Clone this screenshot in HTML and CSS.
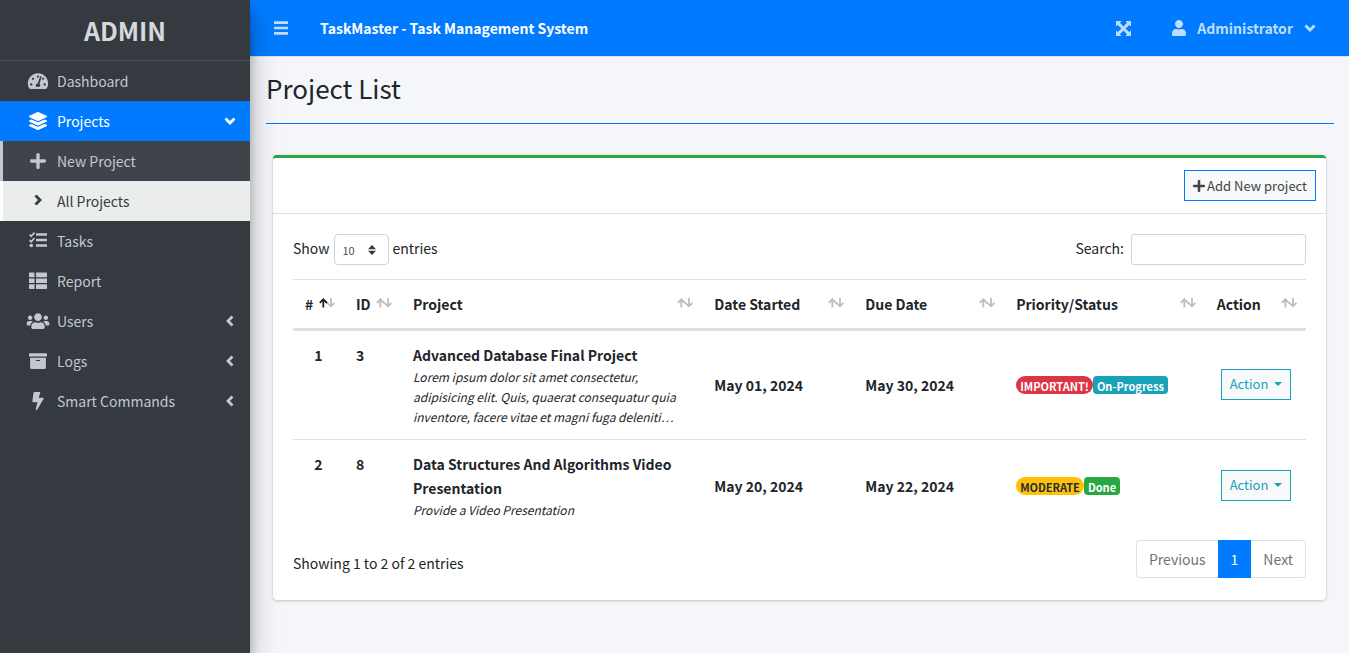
FILE: index.html
```html
<!DOCTYPE html>
<html lang="en">
<head>
<meta charset="utf-8">
<title>TaskMaster - Task Management System</title>
<link rel="stylesheet" href="styles.css">
</head>
<body>
<svg class="sprite" aria-hidden="true">
  <symbol id="i-plus" viewBox="0 0 448 512"><path d="M416 208H272V64c0-17.67-14.33-32-32-32h-32c-17.67 0-32 14.33-32 32v144H32c-17.67 0-32 14.33-32 32v32c0 17.67 14.33 32 32 32h144v144c0 17.67 14.33 32 32 32h32c17.67 0 32-14.33 32-32V304h144c17.67 0 32-14.33 32-32v-32c0-17.67-14.33-32-32-32z"/></symbol>
  <symbol id="i-left" viewBox="0 0 10 12"><path d="M7.5 1.5L3 6l4.500 4.500" fill="none" stroke="currentColor" stroke-width="2.800"/></symbol>
  <symbol id="i-sort" viewBox="0 0 16 10"><g fill="none" stroke="currentColor" stroke-width="1.800"><path d="M4.300 9.500V1.500M.8 4.800l3.500-3.500 3.700 3.700"/><path d="M12 0v8M8 4.600l4 3.700 3.500-3.500"/></g></symbol>
</svg>
<div class="app">
  <aside class="sidebar">
    <a class="brand" href="#">ADMIN</a>
    <nav class="menu">
      <a class="item" href="#"><svg class="icon" viewBox="0 0 576 512"><path d="M288 32C128.940 32 0 160.940 0 320c0 52.800 14.250 102.260 39.060 144.800 5.610 9.620 16.300 15.200 27.440 15.200h443c11.140 0 21.830-5.580 27.440-15.200C561.750 422.260 576 372.800 576 320c0-159.060-128.940-288-288-288zm0 64c14.710 0 26.580 10.130 30.320 23.650-1.110 2.260-2.640 4.230-3.450 6.670l-9.220 27.670c-5.130 3.490-10.970 6.010-17.640 6.010-17.670 0-32-14.330-32-32S270.330 96 288 96zM96 384c-17.670 0-32-14.330-32-32s14.330-32 32-32 32 14.330 32 32-14.330 32-32 32zm48-160c-17.670 0-32-14.330-32-32s14.330-32 32-32 32 14.330 32 32-14.330 32-32 32zm246.770-72.410l-61.330 184C343.130 347.330 352 364.540 352 384c0 11.720-3.380 22.550-8.880 32H232.880c-5.500-9.450-8.880-20.280-8.880-32 0-33.940 26.500-61.430 59.900-63.590l61.340-184.010c4.170-12.560 17.730-19.450 30.360-15.170 12.570 4.190 19.350 17.790 15.170 30.360zm14.660 57.200l15.520-46.550c3.470-1.290 7.130-2.230 11.050-2.230 17.670 0 32 14.330 32 32s-14.330 32-32 32c-11.380-.01-20.890-6.280-26.570-15.220zM480 384c-17.670 0-32-14.330-32-32s14.330-32 32-32 32 14.330 32 32-14.330 32-32 32z"/></svg><span>Dashboard</span></a>
      <a class="item active" href="#"><svg class="icon" viewBox="0 0 512 512"><path d="M12.410 148.020l232.940 105.670c6.800 3.090 14.490 3.090 21.290 0l232.940-105.670c16.550-7.510 16.550-32.520 0-40.030L266.650 2.310a25.607 25.607 0 0 0-21.290 0L12.410 107.980c-16.550 7.510-16.550 32.530 0 40.040zm487.180 88.280l-58.090-26.330-161.640 73.270c-7.560 3.430-15.590 5.170-23.860 5.170s-16.290-1.740-23.860-5.170L70.510 209.970l-58.100 26.330c-16.550 7.500-16.550 32.500 0 40l232.940 105.590c6.800 3.080 14.490 3.080 21.290 0L499.590 276.300c16.550-7.500 16.550-32.500 0-40zm0 127.800l-57.870-26.230-161.860 73.370c-7.560 3.430-15.590 5.170-23.860 5.170s-16.290-1.740-23.860-5.170L70.290 337.870 12.410 364.100c-16.550 7.500-16.550 32.500 0 40l232.940 105.590c6.800 3.080 14.490 3.080 21.290 0L499.590 404.100c16.550-7.500 16.550-32.500 0-40z"/></svg><span>Projects</span><svg class="caret open"><use href="#i-left"/></svg></a>
      <a class="item sub" href="#"><svg class="icon"><use href="#i-plus"/></svg><span>New Project</span></a>
      <a class="item sub current" href="#"><svg class="icon" viewBox="0 0 18 18"><path d="M6.500 3.500L11 8l-4.500 4.500" fill="none" stroke="currentColor" stroke-width="2.800"/></svg><span>All Projects</span></a>
      <a class="item" href="#"><svg class="icon" viewBox="0 0 18 18"><path d="M7 2.500h11M7 8h11M7 13.500h11" fill="none" stroke="currentColor" stroke-width="2.400"/><path d="M.6 2.700l1.600 1.500L5.500.6M.6 8.200l1.600 1.500 3.300-3.700" fill="none" stroke="currentColor" stroke-width="1.700"/><circle cx="2.300" cy="13.500" r="1.800"/></svg><span>Tasks</span></a>
      <a class="item" href="#"><svg class="icon" viewBox="0 0 18 18"><path d="M.8.500h4a.8.800 0 0 1 .8.800v4H0v-4a.8.800 0 0 1 .8-.8zM7 .500h10.200a.8.800 0 0 1 .8.800v4H7zM0 6.500h5.600v4.600H0zM7 6.500h11v4.600H7zM0 12.300h5.600V17H.800a.8.800 0 0 1-.8-.8zM7 12.300h11v3.900a.8.800 0 0 1-.8.800H7z"/></svg><span>Report</span></a>
      <a class="item" href="#"><svg class="icon" viewBox="0 0 640 512"><path d="M96 224c35.300 0 64-28.700 64-64s-28.700-64-64-64-64 28.700-64 64 28.700 64 64 64zm448 0c35.300 0 64-28.700 64-64s-28.700-64-64-64-64 28.700-64 64 28.700 64 64 64zm32 32h-64c-17.600 0-33.500 7.100-45.100 18.600 40.300 22.100 68.900 62 75.100 109.400h66c17.700 0 32-14.300 32-32v-32c0-35.300-28.700-64-64-64zm-256 0c61.900 0 112-50.100 112-112S381.900 32 320 32 208 82.100 208 144s50.100 112 112 112zm76.800 32h-8.300c-20.800 10-43.900 16-68.500 16s-47.600-6-68.500-16h-8.300C179.600 288 128 339.600 128 403.200V432c0 26.500 21.500 48 48 48h288c26.500 0 48-21.500 48-48v-28.800c0-63.600-51.600-115.200-115.200-115.200zm-223.700-13.400C161.500 263.100 145.600 256 128 256H64c-35.300 0-64 28.700-64 64v32c0 17.700 14.300 32 32 32h65.900c6.300-47.400 34.900-87.300 75.200-109.400z"/></svg><span>Users</span><svg class="caret"><use href="#i-left"/></svg></a>
      <a class="item" href="#"><svg class="icon" viewBox="0 0 512 512"><path d="M32 448c0 17.700 14.300 32 32 32h384c17.700 0 32-14.300 32-32V160H32v288zm160-212c0-6.600 5.400-12 12-12h104c6.600 0 12 5.400 12 12v8c0 6.600-5.400 12-12 12H204c-6.600 0-12-5.400-12-12v-8zM480 32H32C14.300 32 0 46.300 0 64v48c0 8.800 7.200 16 16 16h480c8.800 0 16-7.200 16-16V64c0-17.700-14.300-32-32-32z"/></svg><span>Logs</span><svg class="caret"><use href="#i-left"/></svg></a>
      <a class="item" href="#"><svg class="icon" viewBox="0 0 320 512"><path d="M296 160H180.600l42.600-129.800C227.200 15 215.700 0 200 0H56C44 0 33.800 8.900 32.200 20.800l-32 240C-1.700 275.200 9.500 288 24 288h118.700L96.600 482.500c-3.600 15.200 8 29.500 23.300 29.500 8.400 0 16.400-4.400 20.800-12l176-304c9.300-15.900-2.200-36-20.700-36z"/></svg><span>Smart Commands</span><svg class="caret"><use href="#i-left"/></svg></a>
    </nav>
  </aside>
  <div class="page">
    <header class="topbar">
      <button class="bar-btn" type="button" aria-label="Toggle menu"><svg class="bars" viewBox="0 0 14 14"><path d="M0 .3h14v2.600H0zM0 5.700h14v2.600H0zM0 11.100h14v2.600H0z"/></svg></button>
      <a class="title" href="#">TaskMaster - Task Management System</a>
      <button class="bar-btn expand" type="button" aria-label="Fullscreen"><svg class="cross" viewBox="0 0 15 15"><path d="M0 0h5.500L4 1.700l3.500 3.800L11 1.700 9.500 0H15v5.500L13.300 4 9.500 7.500l3.800 3.500L15 9.500V15H9.500l1.500-1.700-3.500-3.800L4 13.300 5.500 15H0V9.500L1.700 11l3.800-3.500L1.700 4 0 5.500z"/></svg></button>
      <button class="bar-btn account" type="button"><svg class="person" viewBox="0 0 448 512"><path d="M224 256c70.700 0 128-57.300 128-128S294.700 0 224 0 96 57.300 96 128s57.300 128 128 128zm89.600 32h-16.700c-22.200 10.200-46.900 16-72.900 16s-50.600-5.800-72.900-16h-16.700C60.200 288 0 348.200 0 422.400V464c0 26.500 21.500 48 48 48h352c26.500 0 48-21.500 48-48v-41.600c0-74.200-60.200-134.400-134.400-134.400z"/></svg><span>Administrator</span><svg class="caret open"><use href="#i-left"/></svg></button>
    </header>
    <main class="content">
      <h1>Project List</h1>
      <section class="card">
        <div class="card-head"><button class="btn add" type="button"><svg class="plus"><use href="#i-plus"/></svg>Add New project</button></div>
        <div class="card-body">
          <div class="tools">
            <label class="length">Show <span class="select"><select><option>10</option><option>25</option><option>50</option></select><svg class="updown" viewBox="0 0 8 10"><path d="M4 0l4 4.200H0zM4 10L0 5.800h8z"/></svg></span> entries</label>
            <label class="search">Search: <input type="search"></label>
          </div>
          <table>
            <colgroup><col class="c-num"><col class="c-id"><col><col class="c-date"><col class="c-date"><col class="c-status"><col class="c-action"></colgroup>
            <thead><tr>
              <th><div class="head">#<svg class="sort asc" viewBox="0 0 16 10"><g fill="none" stroke="currentColor" stroke-width="1.800"><path class="dim" d="M12 0v8M8 4.600l4 3.700 3.500-3.500"/><path d="M4.300 9.500V1.500M.8 4.800l3.500-3.500 3.700 3.700"/></g></svg></div></th>
              <th><div class="head">ID<svg class="sort"><use href="#i-sort"/></svg></div></th>
              <th><div class="head">Project<svg class="sort"><use href="#i-sort"/></svg></div></th>
              <th><div class="head">Date Started<svg class="sort"><use href="#i-sort"/></svg></div></th>
              <th><div class="head">Due Date<svg class="sort"><use href="#i-sort"/></svg></div></th>
              <th><div class="head">Priority/Status<svg class="sort"><use href="#i-sort"/></svg></div></th>
              <th><div class="head">Action<svg class="sort"><use href="#i-sort"/></svg></div></th>
            </tr></thead>
            <tbody>
              <tr>
                <td class="num">1</td><td class="id">3</td>
                <td class="project"><b>Advanced Database Final Project</b><p>Lorem ipsum dolor sit amet consectetur, adipisicing elit. Quis, quaerat consequatur quia inventore, facere vitae et magni fuga deleniti…</p></td>
                <td><b>May 01, 2024</b></td><td><b>May 30, 2024</b></td>
                <td><div class="badges"><span class="badge pill red">IMPORTANT!</span><span class="badge teal">On-Progress</span></div></td>
                <td class="act"><button class="btn menu-btn" type="button">Action<svg class="tri" viewBox="0 0 8 4"><path d="M0 0h8L4 4z"/></svg></button></td>
              </tr>
              <tr>
                <td class="num">2</td><td class="id">8</td>
                <td class="project"><b>Data Structures And Algorithms Video Presentation</b><p>Provide a Video Presentation</p></td>
                <td><b>May 20, 2024</b></td><td><b>May 22, 2024</b></td>
                <td><div class="badges"><span class="badge pill yellow">MODERATE</span><span class="badge green">Done</span></div></td>
                <td class="act"><button class="btn menu-btn" type="button">Action<svg class="tri" viewBox="0 0 8 4"><path d="M0 0h8L4 4z"/></svg></button></td>
              </tr>
            </tbody>
          </table>
          <div class="foot">
            <span class="info">Showing 1 to 2 of 2 entries</span>
            <nav class="pages"><a href="#">Previous</a><a class="on" href="#">1</a><a href="#">Next</a></nav>
          </div>
        </div>
      </section>
    </main>
  </div>
</div>
</body>
</html>
```
FILE: styles.css
```css
* { box-sizing: border-box; }
body {
  margin: 0;
  background: #f4f6f9;
  color: #212529;
  font: 14px/24px "Noto Sans CJK SC", "Noto Sans", sans-serif;
}
a { color: inherit; text-decoration: none; }
button, input, select { font: inherit; margin: 0; }
svg { fill: currentColor; flex: none; }
.sprite { position: absolute; width: 0; height: 0; }
.app { display: flex; min-height: 100vh; }

.sidebar {
  position: relative;
  z-index: 1;
  flex: none;
  width: 250px;
  background: #343a40;
  color: #c2c7d0;
  box-shadow: 0 14px 28px rgba(0, 0, 0, .25), 0 10px 10px rgba(0, 0, 0, .22);
}
.brand {
  display: flex;
  justify-content: center;
  align-items: center;
  height: 61px;
  border-bottom: 1px solid #4b545c;
  color: #d6d8d9;
  font-size: 25px;
  font-weight: 700;
}
.item {
  display: flex;
  align-items: center;
  height: 40px;
  padding: 0 15px 0 26px;
}
.icon { width: 24px; height: 18px; margin-right: 7px; }
.caret { width: 10px; height: 12px; margin-left: auto; }
.caret.open { transform: rotate(-90deg); }
.active { background: #007bff; color: #fff; }
.sub { padding-left: 23px; border-left: 3px solid #c2c7d0; background: #3f444a; }
.current { border-color: #fff; background: #ebedec; color: #343a40; }

.page { flex: 1; min-width: 0; }
.topbar {
  display: flex;
  align-items: center;
  height: 57px;
  padding: 0 34px 0 24px;
  border-bottom: 1px solid #dee2e6;
  background: #007bff;
  color: #fff;
  font-weight: 700;
}
.bar-btn {
  display: flex;
  align-items: center;
  padding: 0;
  border: 0;
  background: none;
  color: #bfdeff;
  font-weight: 700;
}
.bars { width: 14px; height: 14px; }
.title { margin-left: 32px; }
.expand { margin-left: auto; }
.cross { width: 15px; height: 15px; }
.account { margin-left: 41px; }
.person { width: 14px; height: 16px; margin-right: 11px; }
.account .caret { margin-left: 12px; }

.content { padding: 16px 15px 16px 16px; }
h1 {
  margin: 0 0 31px;
  padding-bottom: 20px;
  border-bottom: 1px solid #007bff;
  font-size: 26px;
  font-weight: 400;
  line-height: 30px;
}
.card {
  margin: 0 8px 0 7px;
  border-top: 3px solid #28a745;
  border-radius: 4px;
  background: #fff;
  box-shadow: 0 0 1px rgba(0, 0, 0, .13), 0 1px 3px rgba(0, 0, 0, .2);
}
.card-head {
  display: flex;
  justify-content: flex-end;
  padding: 12px 10px;
  border-bottom: 1px solid #dfdfdf;
}
.btn {
  display: flex;
  align-items: center;
  height: 31px;
  padding: 0 8px;
  border: 1px solid #007bff;
  background: #f8f9fa;
  color: #444;
  font-size: 13px;
  line-height: 20px;
  white-space: nowrap;
}
.plus { width: 12px; height: 14px; margin-right: 2px; }
.card-body { padding: 20px 20px 22px; }
.tools { display: flex; justify-content: space-between; }
.length, .search { display: flex; align-items: flex-start; line-height: 28px; }
.select { display: grid; align-items: center; margin: 0 4px; }
.select select {
  grid-area: 1 / 1;
  width: 55px;
  height: 31px;
  padding: 0 8px;
  border: 1px solid #ced4da;
  border-radius: 4px;
  appearance: none;
  background: #fff;
  color: #495057;
  font-size: 11px;
}
.updown { grid-area: 1 / 1; justify-self: end; width: 8px; height: 10px; margin-right: 13px; color: #343a40; pointer-events: none; }
.search input { width: 175px; height: 31px; margin-left: 7px; border: 1px solid #ced4da; border-radius: 3px; background: #fff; }

table { width: 100%; margin-top: 14px; table-layout: fixed; border-collapse: separate; border-spacing: 0; }
.c-num { width: 51px; }
.c-id { width: 57px; }
.c-date { width: 14.9%; }
.c-status { width: 19.8%; }
.c-action { width: 10%; }
th { padding: 12px 9px 12px 12px; border-top: 1px solid #dee2e6; border-bottom: 3px solid #dee2e6; text-align: left; }
.head { display: flex; justify-content: space-between; white-space: nowrap; }
.sort { width: 16px; height: 10px; margin-top: 6px; color: #bdbebf; }
.asc { color: #212529; }
.dim { stroke: #bdbebf; }
td { padding: 12px; }
tbody tr + tr td { border-top: 1px solid #dee2e6; }
.num, .id { font-weight: 700; vertical-align: top; }
.num { text-align: center; }
.project p { margin: 0; font-size: 12px; font-style: italic; line-height: 20px; }
.badges { display: flex; }
.badge { height: 18px; padding: 0 4px; border-radius: 4px; color: #fff; font-size: 11px; font-weight: 700; line-height: 20px; }
.pill { border-radius: 9px; }
.red { background: #dc3545; }
.teal { background: #17a2b8; }
.yellow { background: #ffc107; color: #1f2d3d; }
.green { background: #28a745; }
td.act { padding: 0 16px 2px; }
.menu-btn { border-color: #17a2b8; color: #17a2b8; }
.tri { width: 8px; height: 4px; margin-left: 6px; }

.foot { display: flex; justify-content: space-between; align-items: center; margin-top: 8px; }
.info { padding-top: 8px; }
.pages { display: flex; }
.pages a { height: 38px; padding: 6px 12px; border: 1px solid #dee2e6; color: #6c757d; }
.pages a:first-child { border-right: 0; border-radius: 4px 0 0 4px; }
.pages a:last-child { border-left: 0; border-radius: 0 4px 4px 0; }
.pages .on { border-color: #007bff; background: #007bff; color: #fff; }
```
